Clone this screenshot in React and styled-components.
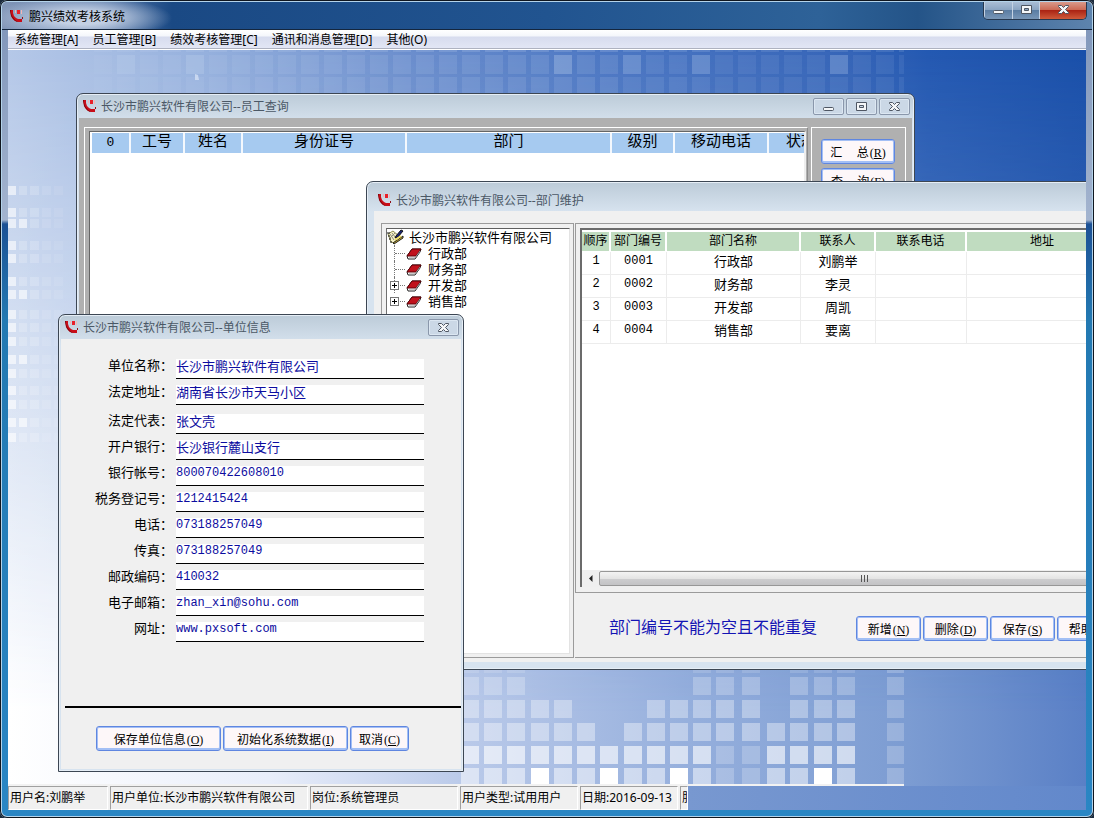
import { useState } from "react";
import styled, { createGlobalStyle } from "styled-components";

const menus = [
  "系统管理[A]",
  "员工管理[B]",
  "绩效考核管理[C]",
  "通讯和消息管理[D]",
  "其他(O)",
];

const employeeColumns = [
  { title: "0", width: 39 },
  { title: "工号", width: 54 },
  { title: "姓名", width: 58 },
  { title: "身份证号", width: 164 },
  { title: "部门", width: 205 },
  { title: "级别", width: 63 },
  { title: "移动电话", width: 94 },
  { title: "状态", width: 66 },
];

const departmentColumns = [
  { title: "顺序", width: 29 },
  { title: "部门编号", width: 56 },
  { title: "部门名称", width: 134 },
  { title: "联系人", width: 75 },
  { title: "联系电话", width: 91 },
  { title: "地址", width: 152 },
];

const departments = [
  { code: "0001", name: "行政部", contact: "刘鹏举" },
  { code: "0002", name: "财务部", contact: "李灵" },
  { code: "0003", name: "开发部", contact: "周凯", nested: true },
  { code: "0004", name: "销售部", contact: "要离", nested: true },
];

const companyFields = [
  { id: "name", label: "单位名称", value: "长沙市鹏兴软件有限公司" },
  { id: "address", label: "法定地址", value: "湖南省长沙市天马小区" },
  { id: "owner", label: "法定代表", value: "张文壳", spaced: true },
  { id: "bank", label: "开户银行", value: "长沙银行麓山支行" },
  { id: "account", label: "银行帐号", value: "800070422608010", latin: true },
  { id: "tax", label: "税务登记号", value: "1212415424", latin: true },
  { id: "phone", label: "电话", value: "073188257049", latin: true },
  { id: "fax", label: "传真", value: "073188257049", latin: true },
  { id: "zip", label: "邮政编码", value: "410032", latin: true },
  { id: "email", label: "电子邮箱", value: "zhan_xin@sohu.com", latin: true },
  { id: "site", label: "网址", value: "www.pxsoft.com", latin: true },
];

const statusItems = [
  "用户名:刘鹏举",
  "用户单位:长沙市鹏兴软件有限公司",
  "岗位:系统管理员",
  "用户类型:试用用户",
  "日期:2016-09-13",
  "服务器",
];

export default function App() {
  return (
    <>
      <GlobalStyle />
      <Shell>
        <ShellTitle>
          <AppIcon />
          <h1>鹏兴绩效考核系统</h1>
          <ShellButtons>
            <ShellButton $width={28} aria-label="最小化">
              <ControlGlyph type="min" />
            </ShellButton>
            <ShellButton $width={27} aria-label="最大化">
              <ControlGlyph type="max" />
            </ShellButton>
            <ShellButton $width={47} $danger aria-label="关闭">
              <ControlGlyph type="close" />
            </ShellButton>
          </ShellButtons>
        </ShellTitle>
        <MenuBar>
          {menus.map((menu) => (
            <MenuButton key={menu}>{menu}</MenuButton>
          ))}
        </MenuBar>
        <Desktop>
          <Backdrop />
          <EmployeeWindow />
          <DepartmentWindow />
          <CompanyWindow />
        </Desktop>
        <StatusBar>
          {statusItems.map((item) => (
            <StatusCell key={item}>{item}</StatusCell>
          ))}
        </StatusBar>
      </Shell>
    </>
  );
}

function EmployeeWindow() {
  return (
    <EmployeeFrame>
      <TitleBar $height={24}>
        <AppIcon />
        <h2>长沙市鹏兴软件有限公司--员工查询</h2>
        <WindowButton aria-label="最小化">
          <ControlGlyph type="min" />
        </WindowButton>
        <WindowButton aria-label="最大化">
          <ControlGlyph type="max" />
        </WindowButton>
        <WindowButton aria-label="关闭">
          <ControlGlyph type="close" />
        </WindowButton>
      </TitleBar>
      <EmployeeBody>
        <EmployeeListPanel>
          <EmployeeList>
            <EmployeeTable>
              <colgroup>
                {employeeColumns.map((column) => (
                  <Col key={column.title} $width={column.width} />
                ))}
              </colgroup>
              <thead>
                <tr>
                  {employeeColumns.map((column) => (
                    <th key={column.title}>{column.title}</th>
                  ))}
                </tr>
              </thead>
            </EmployeeTable>
          </EmployeeList>
        </EmployeeListPanel>
        <EmployeeActions>
          <ActionButton>
            汇&nbsp; 总<Mnemonic letter="R" />
          </ActionButton>
          <ActionButton>
            查&nbsp; 询<Mnemonic letter="F" />
          </ActionButton>
        </EmployeeActions>
      </EmployeeBody>
    </EmployeeFrame>
  );
}

function DepartmentWindow() {
  return (
    <DepartmentFrame>
      <TitleBar $height={29} $thick>
        <AppIcon />
        <h2>长沙市鹏兴软件有限公司--部门维护</h2>
      </TitleBar>
      <DepartmentBody>
        <TreePanel>
          <Tree>
            <TreeRoot>
              <NotebookIcon />
              长沙市鹏兴软件有限公司
            </TreeRoot>
            <TreeList>
              {departments.map((department) => (
                <TreeItem key={department.code}>
                  {department.nested && (
                    <ExpandButton aria-label={`展开${department.name}`} />
                  )}
                  <BookIcon />
                  {department.name}
                </TreeItem>
              ))}
            </TreeList>
          </Tree>
        </TreePanel>
        <DepartmentMain>
          <GridPanel>
            <GridArea>
              <DepartmentTable>
                <colgroup>
                  {departmentColumns.map((column) => (
                    <Col key={column.title} $width={column.width} />
                  ))}
                </colgroup>
                <thead>
                  <tr>
                    {departmentColumns.map((column) => (
                      <th key={column.title}>{column.title}</th>
                    ))}
                  </tr>
                </thead>
                <tbody>
                  {departments.map((department, index) => (
                    <tr key={department.code}>
                      <LatinCell>{index + 1}</LatinCell>
                      <LatinCell>{department.code}</LatinCell>
                      <td>{department.name}</td>
                      <td>{department.contact}</td>
                      <td />
                      <td />
                    </tr>
                  ))}
                </tbody>
              </DepartmentTable>
              <ScrollBar>
                <ScrollArrow aria-label="向左滚动">
                  <svg width="5" height="7" viewBox="0 0 5 7">
                    <path d="M4.500 0v7L1 3.500z" fill="#222" />
                  </svg>
                </ScrollArrow>
                <ScrollThumb>
                  <i />
                  <i />
                  <i />
                </ScrollThumb>
              </ScrollBar>
            </GridArea>
          </GridPanel>
          <DepartmentFooter>
            <Notice>部门编号不能为空且不能重复</Notice>
            <FooterButtons>
              <ActionButton>
                新增
                <Mnemonic letter="N" />
              </ActionButton>
              <ActionButton>
                删除
                <Mnemonic letter="D" />
              </ActionButton>
              <ActionButton>
                保存
                <Mnemonic letter="S" />
              </ActionButton>
              <ActionButton>
                帮助
                <Mnemonic letter="H" />
              </ActionButton>
            </FooterButtons>
          </DepartmentFooter>
        </DepartmentMain>
      </DepartmentBody>
    </DepartmentFrame>
  );
}

function CompanyWindow() {
  const [values, setValues] = useState(
    Object.fromEntries(companyFields.map((field) => [field.id, field.value]))
  );

  return (
    <CompanyFrame>
      <TitleBar $height={24}>
        <AppIcon />
        <h2>长沙市鹏兴软件有限公司--单位信息</h2>
        <WindowButton aria-label="关闭">
          <ControlGlyph type="close" />
        </WindowButton>
      </TitleBar>
      <CompanyForm onSubmit={(event) => event.preventDefault()}>
        <Fields>
          {companyFields.map((field) => (
            <Field key={field.id} $spaced={field.spaced}>
              <label htmlFor={field.id}>{field.label}：</label>
              <FieldInput
                id={field.id}
                $latin={field.latin}
                value={values[field.id]}
                onChange={(event) =>
                  setValues({ ...values, [field.id]: event.target.value })
                }
              />
            </Field>
          ))}
        </Fields>
        <CompanyActions>
          <ActionButton type="submit">
            保存单位信息
            <Mnemonic letter="O" />
          </ActionButton>
          <ActionButton type="button">
            初始化系统数据
            <Mnemonic letter="I" />
          </ActionButton>
          <ActionButton type="button">
            取消
            <Mnemonic letter="C" />
          </ActionButton>
        </CompanyActions>
      </CompanyForm>
    </CompanyFrame>
  );
}

function Mnemonic({ letter }) {
  return (
    <MnemonicText>
      (<u>{letter}</u>)
    </MnemonicText>
  );
}

function AppIcon() {
  return (
    <svg width="14" height="14" viewBox="0 0 14 14" aria-hidden="true">
      <path d="M0 1h3v3l1 3 2 2 2 1h4v3H8l-3-1-3-3-1-3z" fill="#c80d18" />
      <path d="M0 1h1v3l1 3 3 4 3 2H7l-3-2-3-4z" fill="#7c0008" />
      <path d="M7 1h3v4H7z" fill="#e8202a" />
      <path d="M5 1h1v3H5zM11 1h1v4h-1z" fill="#f6b4b4" />
      <path d="M12 8h1v2h-1z" fill="#8f1018" />
    </svg>
  );
}

function ControlGlyph({ type }) {
  const outline = { fill: "#f4f6f8", stroke: "#4e5663", strokeWidth: 1 };
  return (
    <svg width="13" height="11" viewBox="0 0 13 11" aria-hidden="true">
      {type === "min" && (
        <rect x="1.500" y="6.500" width="10" height="3" rx="1" {...outline} />
      )}
      {type === "max" && (
        <path
          d="M1.500 1.500h10v8h-10zM4.500 4.500h4v2h-4z"
          fillRule="evenodd"
          {...outline}
        />
      )}
      {type === "close" && (
        <path
          d="M1.500 1.500h3l2 2 2-2h3v1L8.500 5.500l3 3v1h-3l-2-2-2 2h-3v-1l3-3-3-3z"
          {...outline}
        />
      )}
    </svg>
  );
}

function NotebookIcon() {
  return (
    <svg width="18" height="16" viewBox="0 0 18 16" aria-hidden="true">
      <path d="M1 5l5-3 6 5-5 7-3-1z" fill="#f5f0c4" stroke="#8d8d55" />
      <path d="M3 5l4 6M5 4l4 5M3 9l5-5" stroke="#8c8c80" />
      <path d="M0 4h3M1 7h2M2 10h2M3 13h2" stroke="#111" />
      <path d="M6 14l10-7v2l-9 6z" fill="#c9a927" stroke="#222" />
      <path d="M9 7l5-6 2 1-5 6-3 1z" fill="#18247e" stroke="#111" />
      <path d="M8 11l6-4" stroke="#f0df68" strokeWidth="2" />
    </svg>
  );
}

function BookIcon() {
  return (
    <svg width="16" height="13" viewBox="0 0 16 13" aria-hidden="true">
      <path d="M1 9l5-7h9l-1 3-5 7H2z" fill="#fff" stroke="#222" />
      <path d="M1 9l5-7h9l-5 7z" fill="#c1121c" stroke="#5c0006" />
      <path d="M3 11h6l5-7" fill="none" stroke="#999" />
    </svg>
  );
}

function Backdrop() {
  const topCells = Array.from({ length: 36 }, (_, i) => 86 + i * 23);
  const brightTop = [109, 178, 546, 615, 684, 822];
  const bottomX = [
    453, 476, 499, 523, 546, 569, 592, 616, 639, 662, 685, 708, 734, 759, 782,
    806, 829, 879,
  ];
  // one character per entry of bottomX
  const bottomRows = [
    { y: 620, alpha: 0.14, on: "111000000011101111" },
    { y: 627, alpha: 0.24, on: "111000000011101111" },
    { y: 650, alpha: 0.34, on: "111110001111101111" },
    { y: 673, alpha: 0.38, on: "111111011111111111" },
    { y: 696, alpha: 0.62, on: "111111111111111111" },
    { y: 718, alpha: 0.5, on: "111111111111111111" },
  ];
  const white = [523, 592, 662, 806];
  const edgeRows = [
    136, 158, 169, 191, 204, 227, 240, 260, 273, 287, 305, 319, 336, 350, 368,
    383,
  ];

  return (
    <BackdropArt viewBox="0 0 896 736" aria-hidden="true">
      {topCells.map((x) => {
        const alpha = x > 700 ? 0.08 : 0.12;
        return (
          <g key={x} fill={x < 600 ? "#b9cdec" : "#a3bde6"}>
            <rect x={x} y="0" width="18" height="2" opacity={alpha + 0.1} />
            <rect
              x={x}
              y="5"
              width="18"
              height="19"
              opacity={brightTop.includes(x) ? 0.35 : alpha + 0.04}
            />
            <rect x={x} y="27" width="18" height="19" opacity={alpha + 0.04} />
          </g>
        );
      })}
      <path d="M187 24l3 1 1 5h-4z" fill="#dbe6f7" opacity="0.7" />
      {edgeRows.map((y, i) => (
        <g key={y} fill="#fff">
          <rect x="0" y={y} width="8" height="9" opacity="0.6" />
          <rect
            x="11"
            y={y}
            width="8"
            height="9"
            opacity={i % 4 === 2 ? 0.6 : 0.2}
          />
          <rect x="22" y={y} width="9" height="9" opacity="0.18" />
          <rect x="34" y={y} width="9" height="9" opacity="0.1" />
          <rect x="46" y={y} width="9" height="9" opacity="0.08" />
        </g>
      ))}
      {bottomRows.map((row, rowIndex) =>
        bottomX.map((x, i) => {
          if (row.on[i] !== "1") return null;
          const lit = rowIndex === 5 && white.includes(x);
          const faded = x === 879 || (rowIndex > 3 && (x === 708 || x === 734));
          return (
            <rect
              key={`${x}-${row.y}`}
              x={x}
              y={row.y}
              width="18"
              height={rowIndex === 0 ? 3 : rowIndex === 5 ? 16 : 18}
              fill="#fff"
              opacity={lit ? 1 : faded ? 0.22 : row.alpha}
            />
          );
        })
      )}
      <rect x="0" y="734" width="896" height="2" fill="#f2f2f2" />
    </BackdropArt>
  );
}

const GlobalStyle = createGlobalStyle`
  * {
    box-sizing: border-box;
  }

  body {
    margin: 0;
    overflow: hidden;
    background: #1b2a3c;
    color: #000;
    font-family: "Noto Sans", "Noto Sans CJK SC", sans-serif;
    font-size: 12px;
  }

  button, input {
    font: inherit;
    color: inherit;
    margin: 0;
  }

  h1, h2, p {
    margin: 0;
    font-size: 12px;
    font-weight: 400;
  }
`;

const Shell = styled.main`
  display: flex;
  flex-direction: column;
  min-height: 100vh;
  padding: 2px 8px 8px;
  border-radius: 7px;
  box-shadow: inset 0 0 0 1px #10161f, inset 0 0 0 2px #b4d3ea;
  background: linear-gradient(
    180deg,
    #7d93b8 0,
    #a3b4cf 220px,
    #1c5195 224px,
    #2379b2 320px,
    #2a86c4 100%
  );
`;

const ShellTitle = styled.header`
  display: flex;
  align-items: center;
  gap: 5px;
  height: 28px;
  margin: 0 -6px;
  padding-left: 8px;
  border-radius: 5px 5px 0 0;
  background: radial-gradient(
      ellipse 90px 22px at 80px 16px,
      #c3d0e4 30%,
      transparent 100%
    ),
    linear-gradient(
      90deg,
      #8296b7 0,
      #5b7bab 100px,
      #1a4984 170px,
      #215490 50%,
      #2e6298 75%,
      #245488 84%,
      #5e84ae 100%
    );
  border-bottom: 1px solid #14263e;

  h1 {
    flex: 1;
  }
`;

const ShellButtons = styled.div`
  display: flex;
  align-self: flex-start;
  margin-right: 5px;
  border: 1px solid #26384f;
  border-top: 0;
  border-radius: 0 0 5px 5px;
  overflow: hidden;
`;

const ShellButton = styled.button`
  display: grid;
  place-items: center;
  width: ${({ $width }) => $width}px;
  height: 17px;
  padding: 0 0 2px;
  border: 0;
  border-left: 1px solid #c4d2e3;
  background: ${({ $danger }) =>
    $danger
      ? "linear-gradient(#d99a8b 0, #cc6a55 45%, #ab2414 50%, #cf5a3a 100%)"
      : "linear-gradient(#a9bdd5 0, #8ba5c3 45%, #5b7da3 50%, #7896b7 100%)"};
`;

const MenuBar = styled.nav`
  display: flex;
  gap: 14px;
  height: 20px;
  padding-left: 7px;
  border-bottom: 1px solid #fff;
  background: linear-gradient(
    #fff 0,
    #f4f6fb 6px,
    #d7dcee 7px,
    #e2e6f5 18px,
    #aeb2c0 18px
  );
`;

const MenuButton = styled.button`
  height: 20px;
  padding: 0;
  border: 0;
  background: none;
  line-height: 20px;
`;

const Desktop = styled.div`
  position: relative;
  flex: 1;
  overflow: hidden;
  background: linear-gradient(
    90deg,
    #b5c8e8 0,
    #95b0dd 200px,
    #6b8ecd 400px,
    #4c77c3 600px,
    #3665b8 840px,
    #2459b2 920px,
    #1a50aa 100%
  );

  &::before {
    content: "";
    position: absolute;
    inset: 0;
    background: linear-gradient(
      90deg,
      #fff 0,
      #e9eefa 260px,
      #b9c9e9 460px,
      #94aedc 690px,
      #7c9cd2 900px,
      #5a80c6 100%
    );
    mask-image: linear-gradient(180deg, transparent 0, #000 90%);
  }
`;

const BackdropArt = styled.svg`
  position: absolute;
  left: 0;
  bottom: 0;
  width: 896px;
  height: 736px;
`;

const Frame = styled.section`
  position: absolute;
  display: flex;
  flex-direction: column;
  border: 1px solid #3c4653;
  border-radius: 7px 7px 0 0;
  background: linear-gradient(#bccbd8 0, #d7e3ef 30px, #d7e3ef 100%);
  box-shadow: inset 0 0 0 1px #e6eef6;
`;

const EmployeeFrame = styled(Frame)`
  left: 68px;
  top: 43px;
  width: 839px;
  height: 500px;
  padding: 0 2px 2px;
`;

const DepartmentFrame = styled(Frame)`
  left: 358px;
  top: 131px;
  width: 800px;
  height: 489px;
  padding: 0 7px 7px;
`;

const CompanyFrame = styled(Frame)`
  left: 50px;
  top: 264px;
  width: 406px;
  height: 458px;
  padding: 0 2px 2px;
`;

const TitleBar = styled.header`
  display: flex;
  flex: none;
  align-items: center;
  gap: 2px;
  height: ${({ $height }) => $height}px;
  padding: ${({ $thick }) => ($thick ? "6px 3px 0 4px" : "0 2px 0 4px")};
  color: #4b5866;

  h2 {
    flex: 1;
    padding-left: 2px;
  }
`;

const WindowButton = styled.button`
  display: grid;
  place-items: center;
  width: 31px;
  height: 17px;
  padding: 0;
  border: 1px solid #8a97ab;
  border-radius: 2px;
  background: #cbd8e6;
  box-shadow: inset 0 0 0 1px #dce7f2;
`;

const EmployeeBody = styled.div`
  display: flex;
  flex: 1;
  gap: 3px;
  padding: 9px 6px 9px 5px;
  background: #b0b0b0;
`;

const EmployeeListPanel = styled.div`
  display: flex;
  flex: 1;
  min-width: 0;
  padding: 3px 1px 4px 4px;
  border: 1px solid #fff;
  border-right-color: #8c8c8c;
`;

const EmployeeList = styled.div`
  flex: 1;
  overflow: hidden;
  padding: 1px 0 0 2px;
  border: 1px solid #666;
  border-right: 2px solid #eee;
  background: #fff;
`;

const EmployeeTable = styled.table`
  width: 743px;
  table-layout: fixed;
  border-spacing: 0;

  th {
    height: 20px;
    padding: 0;
    border-right: 2px solid #f4f8fd;
    background: #a6caf0;
    font-family: "Liberation Mono", "Noto Sans CJK SC", monospace;
    font-size: 15px;
    font-weight: 400;
    line-height: 20px;
  }

  th:first-child {
    font-size: 13px;
  }
`;

const Col = styled.col`
  width: ${({ $width }) => $width}px;
`;

const ActionButton = styled.button`
  height: 25px;
  padding: 3px 8px 0;
  border: 1px solid #5f86e0;
  border-radius: 3px;
  background: #fdf7f9;
  box-shadow: inset 0 0 0 1px #a3bff5, inset 0 -2px 0 #a3bff5;
  font-family: "Liberation Mono", "Noto Sans CJK SC", monospace;
  font-size: 12px;
  line-height: 20px;
  white-space: nowrap;
`;

const MnemonicText = styled.span`
  padding-left: 1px;
  font-family: "Liberation Serif", serif;
`;

const EmployeeActions = styled.div`
  display: flex;
  flex-direction: column;
  gap: 4px;
  width: 95px;
  padding: 11px 10px 0 9px;
  border: 1px solid #fff;
`;

const DepartmentBody = styled.div`
  display: flex;
  flex: 1;
  gap: 1px;
  min-height: 0;
  padding: 12px 0 4px 7px;
  background: #f0f0f0;
`;

const TreePanel = styled.div`
  display: flex;
  flex: none;
  width: 193px;
  padding: 4px 3px 3px 4px;
  border: 1px solid #9b9b9b;
`;

const Tree = styled.div`
  flex: 1;
  border: 1px solid;
  border-color: #5f5f5f #e3e3e3 #e3e3e3 #6f6f6f;
  background: #fff;
  font-family: "Noto Sans CJK SC", sans-serif;
  font-size: 13px;
  line-height: 16px;
`;

const TreeRoot = styled.div`
  display: flex;
  align-items: center;
  gap: 4px;
  height: 16px;
`;

const TreeList = styled.ul`
  margin: 0 0 0 7px;
  padding: 0;
  list-style: none;
`;

const TreeItem = styled.li`
  position: relative;
  display: flex;
  align-items: center;
  gap: 6px;
  padding-left: 11px;
  height: 16px;
  border-left: 1px dotted #777;

  &:last-child {
    border-left-color: transparent;
  }

  &::before {
    content: "";
    position: absolute;
    left: 0;
    width: 10px;
    border-top: 1px dotted #777;
  }
`;

const ExpandButton = styled.button`
  position: absolute;
  left: -5px;
  top: 4px;
  width: 9px;
  height: 9px;
  padding: 0;
  border: 1px solid #777;
  background: linear-gradient(#000, #000) center / 5px 1px no-repeat,
    linear-gradient(#000, #000) center / 1px 5px no-repeat, #fff;
`;

const DepartmentMain = styled.div`
  display: flex;
  flex-direction: column;
  flex: 1;
  min-width: 0;
`;

const GridPanel = styled.div`
  display: flex;
  flex: 1;
  padding: 4px 0 5px 4px;
  border: 1px solid #9b9b9b;
  border-right: 0;
`;

const GridArea = styled.div`
  display: flex;
  flex-direction: column;
  flex: 1;
  min-width: 0;
  border: 2px solid #6b6b6b;
  border-width: 2px 0 0 2px;
  background: #fff;
`;

const DepartmentTable = styled.table`
  width: 537px;
  margin-top: 2px;
  table-layout: fixed;
  border-spacing: 0;
  font-family: "Noto Sans CJK SC", sans-serif;

  th {
    height: 20px;
    padding: 0 0 4px;
    border-right: 2px solid #fff;
    border-bottom: 1px solid #fff;
    background: #c0dcc0;
    font-size: 12px;
    font-weight: 400;
    line-height: 15px;
    white-space: nowrap;
  }

  td {
    height: 23px;
    padding: 0 0 4px;
    border: 0 solid #ececec;
    border-width: 0 1px 1px 0;
    font-size: 13px;
    line-height: 18px;
    text-align: center;
  }
`;

const LatinCell = styled.td`
  && {
    font-family: "Liberation Mono", monospace;
    font-size: 12px;
  }
`;

const ScrollBar = styled.div`
  display: flex;
  height: 17px;
  margin-top: auto;
  background: #efefef;
`;

const ScrollArrow = styled.button`
  display: grid;
  place-items: center;
  width: 17px;
  padding: 0;
  border: 0;
  background: none;
`;

const ScrollThumb = styled.div`
  display: flex;
  align-items: center;
  justify-content: center;
  gap: 2px;
  width: 530px;
  height: 15px;
  margin-top: 1px;
  border: 1px solid #979797;
  border-radius: 2px;
  background: linear-gradient(
    #f3f3f3 0,
    #e4e4e4 50%,
    #cdcdcf 52%,
    #c3c3c5 100%
  );

  i {
    width: 1px;
    height: 7px;
    background: #555;
  }
`;

const DepartmentFooter = styled.div`
  display: flex;
  align-items: flex-start;
  gap: 39px;
  height: 65px;
  padding: 23px 0 0 34px;
  border-bottom: 1px solid #9b9b9b;
`;

const Notice = styled.p`
  flex: none;
  color: #1414b4;
  font-family: "Noto Sans CJK SC", sans-serif;
  font-size: 16px;
  line-height: 20px;
`;

const FooterButtons = styled.div`
  display: flex;
  gap: 2px;

  ${ActionButton} {
    width: 65px;
  }
`;

const CompanyForm = styled.form`
  display: flex;
  flex-direction: column;
  flex: 1;
  justify-content: space-between;
  padding-top: 20px;
  background: #f0f0f0;
`;

const Fields = styled.div`
  display: flex;
  flex-direction: column;
  gap: 6px;
`;

const Field = styled.div`
  display: grid;
  grid-template-columns: 112px 248px;
  column-gap: 3px;
  height: 20px;
  margin-top: ${({ $spaced }) => ($spaced ? 3 : 0)}px;
  font-family: "Noto Sans CJK SC", sans-serif;
  font-size: 13px;
  line-height: 12px;

  label {
    text-align: right;
    white-space: nowrap;
  }
`;

const FieldInput = styled.input`
  height: 20px;
  min-width: 0;
  padding: ${({ $latin }) => ($latin ? "0 0 5px" : "0 0 7px")};
  border: 0;
  border-bottom: 1px solid #000;
  outline: 0;
  background: #fff;
  color: #0c0ca0;
  font-family: ${({ $latin }) =>
    $latin ? '"Liberation Mono", monospace' : '"Noto Sans CJK SC", sans-serif'};
  font-size: ${({ $latin }) => ($latin ? 12 : 13)}px;
  line-height: 12px;
`;

const CompanyActions = styled.div`
  display: flex;
  gap: 2px;
  margin-left: 4px;
  padding: 18px 0 18px 31px;
  border-top: 2px solid #000;

  ${ActionButton} {
    width: 125px;
  }

  ${ActionButton}:last-child {
    width: 59px;
  }
`;

const StatusBar = styled.footer`
  display: grid;
  grid-template-columns: 100px 198px 148px 118px 98px 8px;
  gap: 2px;
  height: 24px;
  background: linear-gradient(
    90deg,
    #f0f0f0 680px,
    #7898d0 680px,
    #6288cb 100%
  );
`;

const StatusCell = styled.div`
  overflow: hidden;
  padding-left: 1px;
  border: 1px solid;
  border-color: #a0a0a0 #fff #fff #a0a0a0;
  line-height: 22px;
  white-space: nowrap;
`;
